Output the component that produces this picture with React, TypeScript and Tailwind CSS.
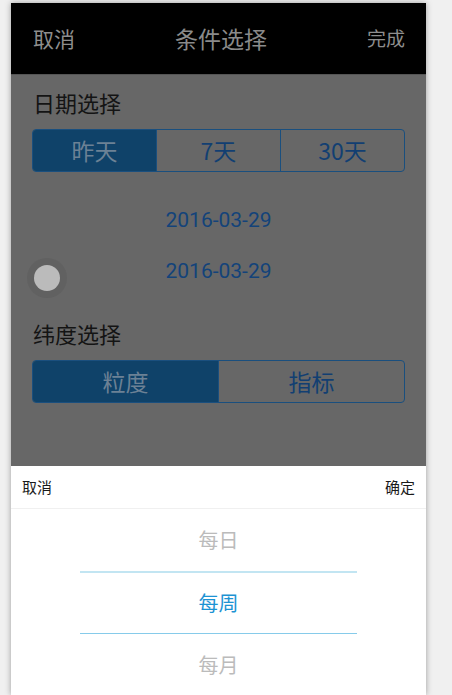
import React from "react";

const cjk = { fontFamily: '"Noto Sans CJK SC", "Noto Sans", sans-serif' };
const roboto = { fontFamily: 'Roboto, "Noto Sans CJK SC", sans-serif' };

function Seg({ items }: { items: string[] }) {
  return (
    <div className="mx-[21px] flex h-[43px] overflow-hidden rounded-[4px] border border-[#1a4f7e]">
      {items.map((t, i) => (
        <div
          key={t}
          className={
            "flex flex-1 items-center justify-center text-[23px] " +
            (i === 0
              ? "bg-[#0f4269] text-[#6c8195]"
              : "border-l border-[#1a4f7e] text-[#123f72]")
          }
          style={cjk}
        >
          {t}
        </div>
      ))}
    </div>
  );
}

export default function App() {
  return (
    <div className="min-h-[695px] w-[452px] bg-[#f0f0f0] pt-[3px]" style={cjk}>
      <div className="ml-[11px] flex h-[692px] w-[415px] flex-col overflow-hidden shadow-[0_0_6px_rgba(0,0,0,0.35)]">
        {/* Header */}
        <div className="flex h-[71px] shrink-0 items-center justify-between bg-black pl-[22px] pr-[21px]">
          <span className="text-[21px] text-[#8e8e8e]">取消</span>
          <span className="text-[23px] text-[#8a8a8a]">条件选择</span>
          <span className="text-[19px] text-[#8e8e8e]">完成</span>
        </div>
        {/* Dimmed content */}
        <div className="relative h-[392px] shrink-0 border-t border-[#555] bg-[#676767]">
          <div className="mt-[13px] px-[22px] text-[22px] leading-[28px] text-[#141414]">日期选择</div>
          <div className="mt-[13px]">
            <Seg items={["昨天", "7天", "30天"]} />
          </div>
          <div className="mt-[33px] text-center text-[21px] leading-[30px] text-[#13437a]" style={roboto}>
            2016-03-29
          </div>
          <div className="mt-[21px] text-center text-[21px] leading-[30px] text-[#13437a]" style={roboto}>
            2016-03-29
          </div>
          <div className="mt-[33px] px-[22px] text-[22px] leading-[28px] text-[#141414]">纬度选择</div>
          <div className="mt-[13px]">
            <Seg items={["粒度", "指标"]} />
          </div>
          {/* floating circle */}
          <div className="absolute left-[16px] top-[183px] flex h-[40px] w-[40px] items-center justify-center rounded-full bg-[#616161]">
            <div className="h-[26px] w-[26px] rounded-full bg-[#bbbbbb]" />
          </div>
        </div>
        {/* Bottom sheet */}
        <div className="flex flex-1 flex-col bg-white">
          <div className="flex h-[43px] shrink-0 items-center justify-between border-b border-[#f0f0f0] px-[11px] text-[15px] text-[#1a1a1a]">
            <span>取消</span>
            <span>确定</span>
          </div>
          <div className="flex h-[62px] items-center justify-center text-[20px] text-[#bbbbbb]">每日</div>
          <div className="mx-[69px] h-[2px] bg-[#c2e5f2]" />
          <div className="flex h-[60px] items-center justify-center text-[20px] text-[#1d93d3]">每周</div>
          <div className="mx-[69px] h-[1px] bg-[#86cbea]" />
          <div className="flex h-[61px] items-center justify-center text-[20px] text-[#bbbbbb]">每月</div>
        </div>
      </div>
    </div>
  );
}
